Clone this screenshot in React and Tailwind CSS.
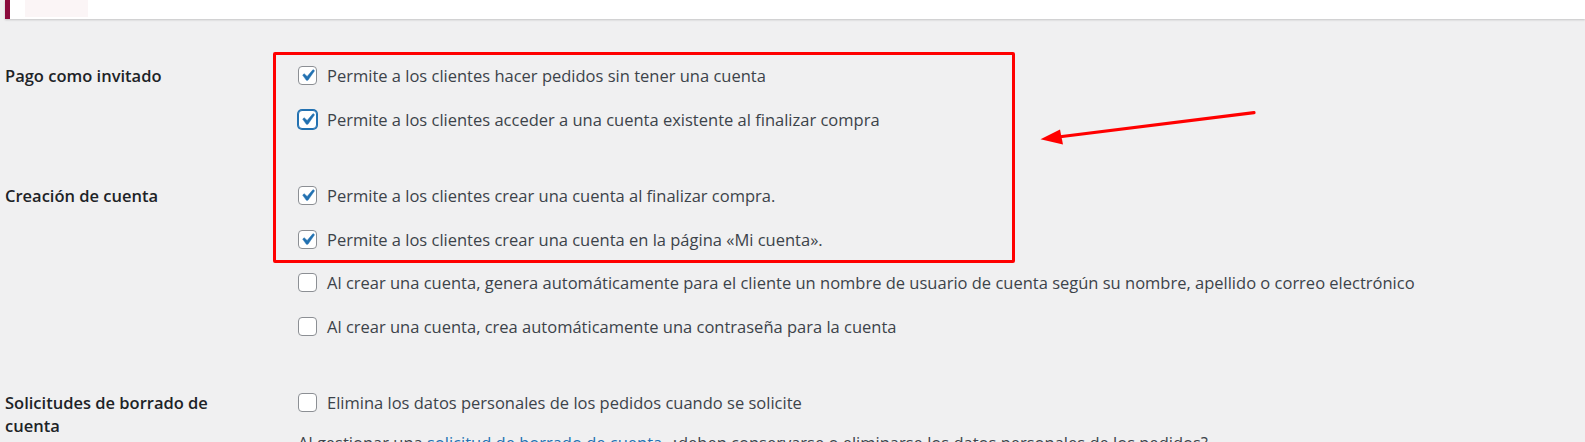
import React from "react";

function Check({ checked, focused }) {
  return (
    <span
      className={
        "relative flex h-[19px] w-[19px] shrink-0 items-center justify-center rounded-[4px] bg-white border " +
        (focused
          ? "border-[#2271b1] shadow-[0_0_0_1px_#2271b1]"
          : "border-[#8c8f94]")
      }
    >
      {checked && (
        <svg viewBox="0 0 20 20" className="absolute left-[-3px] top-[-3px] h-[23px] w-[23px]">
          <path
            d="M14.83 4.89l1.34.94-5.81 8.38H9.02L5.78 9.67l1.34-1.25 2.57 2.4z"
            fill="#2271b1"
            stroke="#2271b1"
            strokeWidth="0.4"
            strokeLinejoin="round"
          />
        </svg>
      )}
    </span>
  );
}

function Row({ checked, focused, children }) {
  return (
    <div className="flex h-[19px] items-center gap-[10px]">
      <Check checked={checked} focused={focused} />
      <span className="whitespace-nowrap text-[16.5px] leading-[19px] text-[#3c434a]">{children}</span>
    </div>
  );
}

function Label({ children }) {
  return (
    <div className="w-[293px] shrink-0">
      <div className="mt-[-2px] max-w-[240px] text-[16.5px] font-semibold leading-[23px] text-[#1d2327]">
        {children}
      </div>
    </div>
  );
}

function Section({ label, children, className = "" }) {
  return (
    <div className={"flex " + className}>
      <Label>{label}</Label>
      <div className="flex flex-col gap-[24.5px]">{children}</div>
    </div>
  );
}

export default function App() {
  return (
    <div
      className="relative h-[442px] w-[1585px] overflow-hidden bg-[#f0f0f1]"
      style={{ fontFamily: '"Open Sans", "Noto Sans", sans-serif' }}
    >
      <div className="ml-[5px] h-[19px] border-l-[5px] border-[#8a0a3c] bg-white shadow-[0_1px_2px_rgba(0,0,0,0.18)]">
        <div className="ml-[15px] h-[17px] w-[63px] bg-[#fbf5f6]" />
      </div>

      <div className="pl-[5px]">
        <Section label="Pago como invitado" className="mt-[47px]">
          <Row checked>Permite a los clientes hacer pedidos sin tener una cuenta</Row>
          <Row checked focused>
            Permite a los clientes acceder a una cuenta existente al finalizar compra
          </Row>
        </Section>

        <Section label="Creación de cuenta" className="mt-[57.5px]">
          <Row checked>Permite a los clientes crear una cuenta al finalizar compra.</Row>
          <Row checked>Permite a los clientes crear una cuenta en la página «Mi cuenta».</Row>
          <Row>
            Al crear una cuenta, genera automáticamente para el cliente un nombre de usuario de cuenta según su nombre, apellido o correo electrónico
          </Row>
          <Row>Al crear una cuenta, crea automáticamente una contraseña para la cuenta</Row>
        </Section>

        <div className="mt-[57.5px] flex">
          <Label>Solicitudes de borrado de cuenta</Label>
          <div className="flex flex-col">
            <Row>Elimina los datos personales de los pedidos cuando se solicite</Row>
            <p className="mt-[19px] whitespace-nowrap text-[16.5px] leading-[24px] text-[#3c434a]">
              Al gestionar una <span className="text-[#2271b1]">solicitud de borrado de cuenta</span>, ¿deben conservarse o eliminarse los datos personales de los pedidos?
            </p>
          </div>
        </div>
      </div>

      <div className="pointer-events-none absolute left-[273px] top-[52px] h-[211px] w-[742px] rounded-[2px] border-[3px] border-[#ff0000]" />
      <svg className="pointer-events-none absolute left-0 top-0" width="1585" height="442">
        <line x1="1254" y1="112.7" x2="1058" y2="137" stroke="#ff0000" strokeWidth="3.2" strokeLinecap="round" />
        <polygon points="1040.5,139.3 1060,129.5 1063,144.5" fill="#ff0000" />
      </svg>
    </div>
  );
}
